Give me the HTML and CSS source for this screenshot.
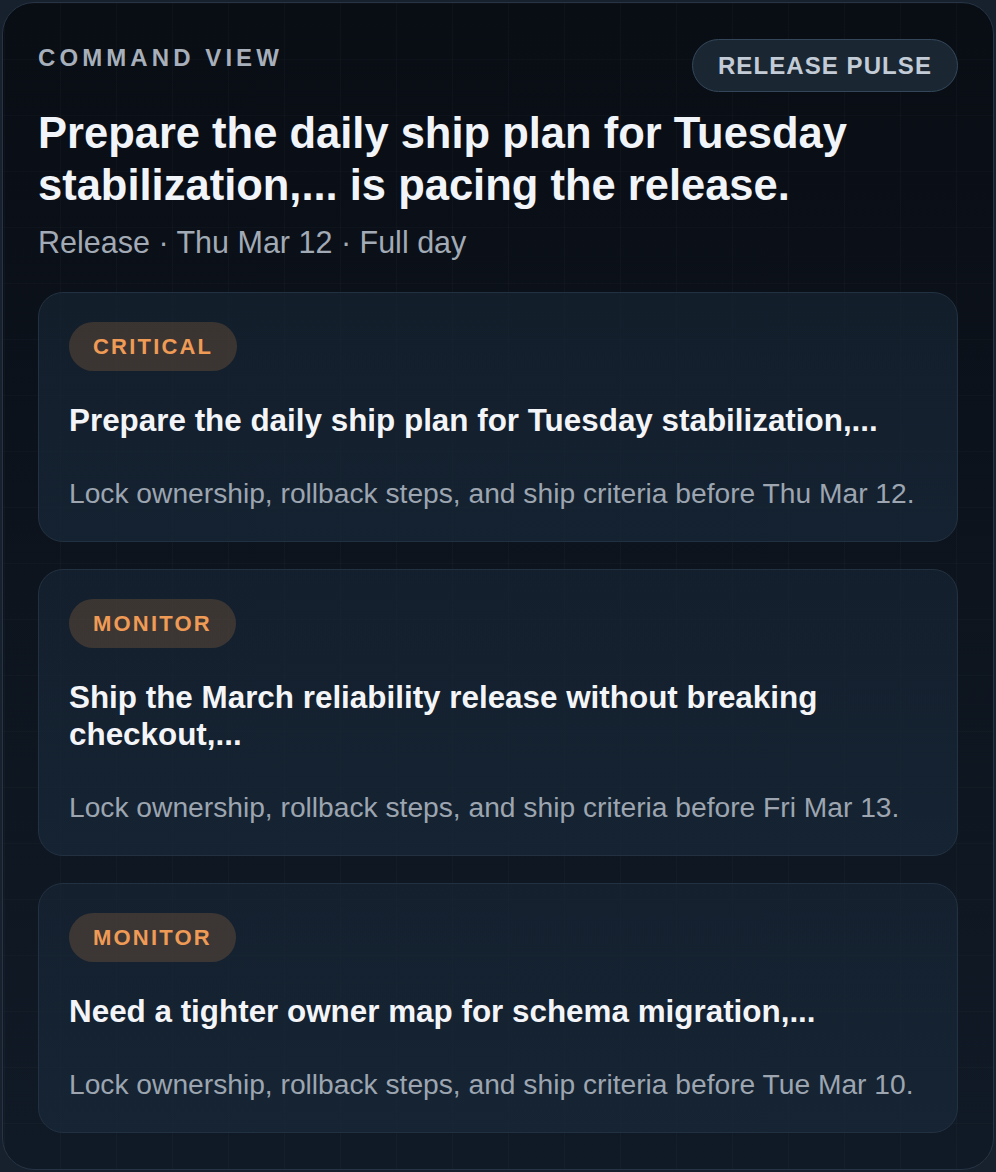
FILE: index.html
```html
<!DOCTYPE html>
<html lang="en">
<head>
<meta charset="utf-8">
<title>Command View</title>
<link rel="stylesheet" href="styles.css">
</head>
<body>
<section class="panel">
  <header class="head">
    <span class="eyebrow">COMMAND VIEW</span>
    <span class="pill">RELEASE PULSE</span>
  </header>
  <h1 class="title">Prepare the daily ship plan for Tuesday stabilization,... is pacing the release.</h1>
  <p class="meta">Release · Thu Mar 12 · Full day</p>
  <div class="cards">
    <article class="card">
      <span class="badge">CRITICAL</span>
      <h2 class="card-title">Prepare the daily ship plan for Tuesday stabilization,...</h2>
      <p class="card-desc">Lock ownership, rollback steps, and ship criteria before Thu Mar 12.</p>
    </article>
    <article class="card">
      <span class="badge">MONITOR</span>
      <h2 class="card-title">Ship the March reliability release without breaking checkout,...</h2>
      <p class="card-desc">Lock ownership, rollback steps, and ship criteria before Fri Mar 13.</p>
    </article>
    <article class="card">
      <span class="badge">MONITOR</span>
      <h2 class="card-title">Need a tighter owner map for schema migration,...</h2>
      <p class="card-desc">Lock ownership, rollback steps, and ship criteria before Tue Mar 10.</p>
    </article>
  </div>
</section>
</body>
</html>
```
FILE: styles.css
```css
html, body {
  margin: 0;
  padding: 0;
}
body {
  background: #17212d;
  font-family: "Liberation Sans", Arial, Helvetica, sans-serif;
  padding: 2px;
  box-sizing: border-box;
  min-height: 1172px;
}
.panel {
  border: 1px solid #263445;
  border-radius: 32px;
  padding: 36px 35px 36px 35px;
  background-color: #0b1018;
  background-image:
    linear-gradient(90deg, rgba(255,255,255,0.018) 1px, transparent 1px),
    linear-gradient(0deg, rgba(255,255,255,0.014) 1px, transparent 1px),
    linear-gradient(180deg, #090d14 0%, #0d141e 50%, #101a26 100%);
  background-size: 56px 56px, 56px 56px, 100% 100%;
  background-position: 1px 1px, 1px 1px, 0 0;
}
.head {
  display: flex;
  justify-content: space-between;
  align-items: flex-start;
}
.eyebrow {
  margin-top: 4px;
  font-size: 24px;
  line-height: 29px;
  font-weight: 700;
  letter-spacing: 0.17em;
  color: #a7afba;
}
.pill {
  display: inline-block;
  padding: 11px 25px;
  border: 1px solid #34475a;
  border-radius: 999px;
  background: #1a2733;
  color: #c3ccd6;
  font-size: 24px;
  line-height: 29px;
  font-weight: 700;
  letter-spacing: 0.045em;
}
.title {
  margin: 15px 0 0;
  font-size: 43.5px;
  line-height: 52px;
  font-weight: 700;
  color: #f1f4f8;
}
.meta {
  margin: 13px 0 0;
  font-size: 30.5px;
  line-height: 36px;
  color: #a2aab5;
}
.cards {
  margin-top: 32px;
  display: flex;
  flex-direction: column;
  gap: 27px;
}
.card {
  border: 1px solid #223141;
  border-radius: 25px;
  padding: 29px 30px 28px;
  background: linear-gradient(180deg, rgba(24,38,54,0.62) 0%, rgba(24,40,57,0.7) 100%);
}
.badge {
  display: inline-block;
  padding: 10px 24px 10px 24px;
  border-radius: 999px;
  background: rgba(240,155,80,0.18);
  color: #f09b55;
  font-size: 22px;
  line-height: 29px;
  font-weight: 700;
  letter-spacing: 0.1em;
}
.card-title {
  margin: 31px 0 0;
  font-size: 31.4px;
  line-height: 37px;
  font-weight: 700;
  color: #f3f5f8;
}
.card-desc {
  margin: 34px 0 0;
  font-size: 28.2px;
  line-height: 40px;
  color: #9ca5b0;
}
```
